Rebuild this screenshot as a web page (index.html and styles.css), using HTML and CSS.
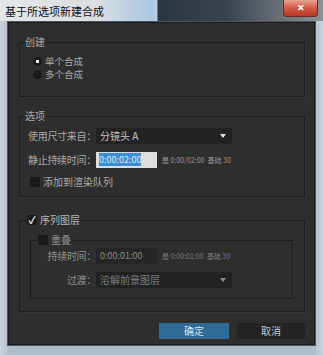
FILE: index.html
```html
<!DOCTYPE html>
<html lang="zh-CN">

<head>
    <meta charset="UTF-8">
    <title>基于所选项新建合成</title>
    <link rel="stylesheet" href="styles.css">
</head>

<body>
    <div class="window">
        <div class="titlebar">
            <span class="title">基于所选项新建合成</span>
            <span class="close">&#x2715;</span>
        </div>

        <div class="client">
            <!-- 创建 -->
            <fieldset class="group">
                <legend>创建</legend>
                <div class="body body-create">
                    <div class="radio-row"><span class="radio checked"></span>单个合成</div>
                    <div class="radio-row"><span class="radio"></span>多个合成</div>
                </div>
            </fieldset>

            <!-- 选项 -->
            <fieldset class="group group-options">
                <legend>选项</legend>
                <div class="body body-options">
                    <div class="row">
                        <span class="label">使用尺寸来自：</span>
                        <div class="dropdown">分镜头 A<span class="arrow"></span></div>
                    </div>
                    <div class="row">
                        <span class="label">静止持续时间：</span>
                        <div class="timecode light"><span class="selected">0:00:02:00</span></div>
                        <span class="note">是 0:00/02:00 &nbsp;基础 30</span>
                    </div>
                    <div class="check-row"><span class="check"></span>添加到渲染队列</div>
                </div>
            </fieldset>

            <!-- 序列图层 -->
            <fieldset class="group group-seq">
                <legend><span class="check checked">&#x2713;</span>序列图层</legend>
                <div class="body body-seq">
                    <fieldset class="group inner">
                        <legend><span class="check"></span>重叠</legend>
                        <div class="body body-inner">
                            <div class="row">
                                <span class="label">持续时间：</span>
                                <div class="timecode">0:00:01:00</div>
                                <span class="note">是 0:00:01:00 &nbsp;基础 30</span>
                            </div>
                            <div class="row">
                                <span class="label">过渡：</span>
                                <div class="dropdown dim">溶解前景图层<span class="arrow"></span></div>
                            </div>
                        </div>
                    </fieldset>
                </div>
            </fieldset>

            <div class="buttons">
                <button class="btn primary">确定</button>
                <button class="btn">取消</button>
            </div>
        </div>
    </div>
</body>

</html>
```

FILE: styles.css
```css
/* Whole dialog */
body {
    margin: 0;
    font-family: "Noto Sans CJK SC", "Noto Sans", sans-serif;
}

.window {
    width: 323px;
    height: 355px;
    box-sizing: border-box;
    background: linear-gradient(to right, #c9d4de, #aebdca 3%, #aebdca 97%, #c9d4de);
    padding: 0 7px 9px 7px;
    display: flex;
    flex-direction: column;
}

/* Title bar */
.titlebar {
    height: 21px;
    margin: 0 -7px;
    display: flex;
    align-items: center;
    background: linear-gradient(to right, #e4e7ea 0%, #d9dee3 30%, #a9c7e2 47%, #b4d0e8 48.5%, #2b3540 49%, #3a434d 70%, #6e747b 88%, #8c9196 100%);
    position: relative;
}

.title {
    font-size: 11px;
    color: #111;
    padding-left: 5px;
    line-height: 12px;
}

.close {
    position: absolute;
    right: 5px;
    top: 0;
    width: 35px;
    height: 17px;
    border-radius: 0 0 4px 4px;
    background: linear-gradient(#e9a493, #cf5a45 50%, #bb3a24);
    border: 1px solid #6b2a20;
    border-top: none;
    box-sizing: border-box;
    color: #fff;
    font-size: 9px;
    font-weight: bold;
    text-align: center;
    line-height: 16px;
}

/* Client area */
.client {
    flex: 1;
    background: #2e2e2e;
    border: 1px solid #4a5560;
    box-shadow: inset 0 0 0 1px #1c1c1c;
    padding: 14px 10px 0 11px;
    color: #a9a9a9;
    font-size: 10px;
    line-height: 12px;
}

/* Groups */
.group {
    margin: 0;
    padding: 0;
    min-width: 0;
    border: 1px solid #1d1d1d;
    box-shadow: 1px 1px 0 #353535;
}

.group legend {
    margin-left: 4px;
    padding: 0 1px;
    height: 12px;
    display: flex;
    align-items: center;
}

.group-options {
    margin-top: 13px;
}

.group-seq {
    margin-top: 17px;
    color: #8e8e8e;
}

.group-seq > legend {
    margin-left: 6px;
    color: #b4b4b4;
}

.inner > legend {
    margin-left: 6px;
}

.body-create {
    padding: 7px 0 15px 13px;
}

.body-options {
    padding: 6px 0 8px 8px;
}

.body-seq {
    padding: 8px 11px 12px 10px;
}

.body-inner {
    padding: 2px 0 10px 0;
}

/* Radios and checkboxes */
.radio-row,
.check-row {
    display: flex;
    align-items: center;
    height: 12px;
}

.radio-row {
    height: 13px;
    line-height: 11px;
    font-size: 9.5px;
}

.radio {
    width: 9px;
    height: 9px;
    border-radius: 50%;
    background: #1a1a1a;
    margin-right: 3px;
    position: relative;
}

.radio.checked::after {
    content: "";
    position: absolute;
    left: 3px;
    top: 3px;
    width: 3px;
    height: 3px;
    background: #e8e8e8;
}

.check-row {
    margin-top: 8px;
    padding-left: 2px;
}

.check {
    width: 10px;
    height: 10px;
    background: #1b1b1b;
    margin-right: 3px;
    color: #eee;
    font-size: 10px;
    line-height: 10px;
    text-align: center;
    font-weight: bold;
}

/* Label + control rows */
.row {
    display: flex;
    align-items: center;
    height: 16px;
}

.row + .row {
    margin-top: 8px;
}

.label {
    flex-shrink: 0;
    white-space: nowrap;
    letter-spacing: -0.3px;
}

.body-options .label {
    width: 68px;
}

.body-inner .label {
    width: 65px;
    text-align: right;
}

.dropdown {
    width: 136px;
    height: 16px;
    box-sizing: border-box;
    background: #222;
    color: #c4c4c4;
    padding-left: 4px;
    line-height: 16px;
    position: relative;
}

.dropdown.dim {
    color: #7c7c7c;
}

.arrow {
    position: absolute;
    right: 6px;
    top: 6px;
    border-left: 3px solid transparent;
    border-right: 3px solid transparent;
    border-top: 4px solid #e0e0e0;
}

.dim .arrow {
    border-top-color: #8a8a8a;
}

.timecode {
    width: 61px;
    height: 16px;
    box-sizing: border-box;
    background: #262626;
    color: #888;
    padding-left: 4px;
    line-height: 16px;
    font-size: 9px;
}

.timecode.light {
    background: #dedede;
    padding-left: 3px;
}

.selected {
    background: #3b8ed3;
    color: #dbe9f6;
    display: inline-block;
    line-height: 13px;
}

.note {
    margin-left: 5px;
    font-size: 7px;
    white-space: nowrap;
    color: #9a9a9a;
}

.body-inner .note {
    color: #7c7c7c;
}

/* Buttons */
.buttons {
    display: flex;
    justify-content: flex-end;
    gap: 8px;
    margin-top: 11px;
}

.btn {
    width: 68px;
    height: 16px;
    border: none;
    background: #232323;
    color: #c8c8c8;
    font-family: inherit;
    font-size: 10px;
    line-height: 16px;
    padding: 0;
}

.btn.primary {
    width: 70px;
    background: #2f6b95;
    color: #dce6ee;
}
```
